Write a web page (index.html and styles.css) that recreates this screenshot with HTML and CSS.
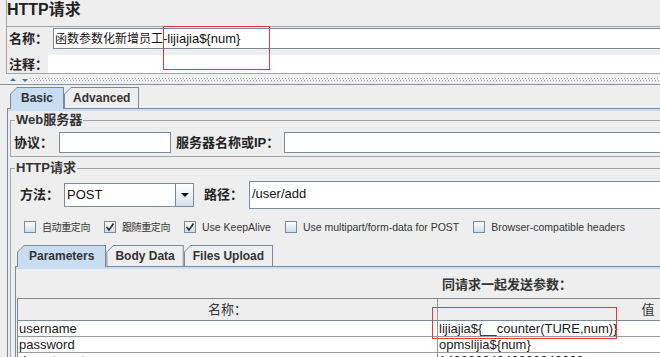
FILE: index.html
```html
<!DOCTYPE html>
<html>
<head>
  <title>HTTP请求</title>
  <link rel="stylesheet" href="styles.css">
</head>
<body>
  <div class="page">
    <div class="top">
      <h1 class="title">HTTP请求</h1>
      <div class="name-row">
        <label class="label">名称：</label>
        <div class="field name-field"><span class="cn">函数参数化新增员工</span>-lijiajia${num}</div>
      </div>
      <div class="note-row">
        <label class="label note-label">注释：</label>
        <div class="note-field"></div>
      </div>
    </div>

    <div class="divider">
      <span class="arrow-up"></span>
      <span class="arrow-down"></span>
      <span class="dots"></span>
    </div>

    <div class="tab-pane">
      <div class="tabs">
        <div class="tab active"><span>Basic</span></div>
        <div class="tab"><span>Advanced</span></div>
      </div>
      <div class="tab-body">
        <fieldset class="group">
          <legend>Web服务器</legend>
          <div class="server-row">
            <label class="label proto-label">协议：</label>
            <div class="field proto-field"></div>
            <label class="label host-label">服务器名称或IP：</label>
            <div class="field grow"></div>
          </div>
        </fieldset>

        <fieldset class="group">
          <legend>HTTP请求</legend>
          <div class="method-row">
            <label class="label method-label">方法：</label>
            <div class="combo">
              <div class="combo-value">POST</div>
              <div class="combo-btn"><span class="caret"></span></div>
            </div>
            <label class="label path-label">路径：</label>
            <div class="field path-field grow">/user/add</div>
          </div>

          <div class="check-row">
            <div class="check"><span class="box"></span><span class="cn">自动重定向</span></div>
            <div class="check">
              <span class="box"><svg width="10" height="10" viewBox="0 0 10 10"><path d="M1.5 5 L4 8 L8.5 1.5" fill="none" stroke="#2b2b2b" stroke-width="1.6"/></svg></span>
              <span class="cn">跟随重定向</span>
            </div>
            <div class="check">
              <span class="box"><svg width="10" height="10" viewBox="0 0 10 10"><path d="M1.5 5 L4 8 L8.5 1.5" fill="none" stroke="#2b2b2b" stroke-width="1.6"/></svg></span>
              <span>Use KeepAlive</span>
            </div>
            <div class="check"><span class="box"></span><span>Use multipart/form-data for POST</span></div>
            <div class="check"><span class="box"></span><span>Browser-compatible headers</span></div>
          </div>

          <div class="tabs sub-tabs">
            <div class="tab active"><span>Parameters</span></div>
            <div class="tab"><span>Body Data</span></div>
            <div class="tab"><span>Files Upload</span></div>
          </div>
          <div class="sub-body">
            <div class="params-title">同请求一起发送参数：</div>
            <div class="params">
              <div class="cell head">名称：</div>
              <div class="cell head">值</div>
              <div class="cell">username</div>
              <div class="cell">lijiajia${__counter(TURE,num)}</div>
              <div class="cell">password</div>
              <div class="cell">opmslijia${num}</div>
              <div class="cell">department</div>
              <div class="cell">14000004040000040000</div>
            </div>
          </div>
        </fieldset>
      </div>
    </div>

    <div class="mark mark-name"></div>
    <div class="mark mark-value"></div>
  </div>
</body>
</html>
```

FILE: styles.css
```css
body {
  margin: 0;
  background: #eeeeee;
  font-family: "Liberation Sans", "Noto Sans CJK SC", sans-serif;
  color: #222;
  overflow: hidden;
}

.page {
  position: relative;
  width: 1000px;
  height: 357px;
  overflow: hidden;
}

/* top panel */
.top {
  margin-left: 6px;
  height: 73px;
  border-left: 1px solid #a3a3a3;
  border-bottom: 1px solid #a3a3a3;
}

.title {
  margin: 0;
  height: 25px;
  padding-top: 1px;
  font-size: 16px;
  font-weight: bold;
  line-height: 18px;
  border-bottom: 1px solid #a3a3a3;
}

.label {
  flex: none;
  font-size: 13px;
  font-weight: bold;
  line-height: 16px;
  white-space: nowrap;
}

.field {
  box-sizing: border-box;
  height: 21px;
  padding-left: 2px;
  border: 1px solid #7a8a99;
  background: #fff;
  font-size: 13px;
  line-height: 19px;
  color: #111;
  white-space: nowrap;
}

.grow {
  flex: 1;
}

.name-row {
  display: flex;
  align-items: center;
  height: 21px;
  margin-top: 1px;
  padding-left: 2px;
}

.name-row .label {
  width: 44px;
}

.name-field {
  flex: 1;
  padding-left: 1px;
}

.name-field .cn {
  font-size: 12px;
}

.note-row {
  display: flex;
  height: 24px;
  padding-left: 2px;
}

.note-label {
  width: 39px;
  margin-top: 9px;
  line-height: 14px;
}

.note-field {
  flex: 1;
  height: 18px;
  margin-top: 6px;
  background: #fff;
}

/* split divider */
.divider {
  display: flex;
  align-items: center;
  height: 10px;
  padding-left: 10px;
  border-bottom: 1px solid #8595a6;
}

.arrow-up {
  width: 0;
  height: 0;
  border-left: 3px solid transparent;
  border-right: 3px solid transparent;
  border-bottom: 3px solid #4f6f99;
}

.arrow-down {
  width: 0;
  height: 0;
  margin: 2px 2px 0 6px;
  border-left: 3px solid transparent;
  border-right: 3px solid transparent;
  border-top: 3px solid #4f6f99;
}

.dots {
  flex: 1;
  height: 3px;
  margin-top: 1px;
  background-image: linear-gradient(90deg, #9aa7b6 1px, transparent 1px), linear-gradient(90deg, #9aa7b6 1px, transparent 1px);
  background-size: 3px 1px;
  background-repeat: repeat-x;
  background-position: 0 0, 1px 2px;
}

/* tabbed pane */
.tab-pane {
  margin-left: 7px;
  padding-top: 2px;
}

.tabs {
  display: flex;
  align-items: flex-end;
  height: 21px;
  padding-left: 3px;
  border-bottom: 1px solid #7a8a99;
}

.tab {
  box-sizing: border-box;
  height: 21px;
  padding: 1px 1px 0 1px;
  background: #7a8a99;
  clip-path: polygon(0 7px, 7px 0, 100% 0, 100% 100%, 0 100%);
}

.tab span {
  display: block;
  height: 20px;
  padding: 0 8px;
  background: #eeeeee;
  font-size: 12px;
  font-weight: bold;
  line-height: 20px;
  color: #333;
  clip-path: polygon(0 6px, 6px 0, 100% 0, 100% 100%, 0 100%);
}

.tab.active {
  height: 22px;
  margin-bottom: -1px;
}

.tab.active span {
  height: 21px;
  padding: 0 10px;
  background: #c8ddf2;
}

.tab-body {
  height: 300px;
  padding: 2px 0 0 2px;
  border-left: 1px solid #7a8a99;
  box-shadow: inset 0 2px 0 #c8ddf2;
}

/* titled groups */
.group {
  margin: 1px 0 0 0;
  padding: 0;
  border: 1px solid #a5a5a5;
  min-inline-size: auto;
}

.group + .group {
  margin-top: 3px;
}

.group legend {
  margin-left: 4px;
  padding: 0 1px;
  font-size: 13px;
  font-weight: bold;
  line-height: 16px;
  color: #333;
}

.server-row {
  display: flex;
  align-items: center;
  height: 21px;
  margin: 4px 0 3px 3px;
}

.proto-label {
  width: 45px;
}

.proto-field {
  width: 112px;
  margin-right: 5px;
}

.host-label {
  width: 108px;
}

.method-row {
  display: flex;
  align-items: center;
  height: 29px;
  margin-top: 4px;
  padding-left: 9px;
}

.method-label {
  width: 44px;
}

.combo {
  display: flex;
  box-sizing: border-box;
  width: 130px;
  height: 24px;
  margin-right: 10px;
  border: 1px solid #7a8a99;
  background: #fff;
}

.combo-value {
  flex: 1;
  padding-left: 2px;
  font-size: 13px;
  line-height: 22px;
  color: #111;
}

.combo-btn {
  display: flex;
  align-items: center;
  justify-content: center;
  width: 17px;
  border-left: 1px solid #7a8a99;
  background: linear-gradient(#ffffff, #d6e2ee);
}

.caret {
  width: 0;
  height: 0;
  border-left: 4px solid transparent;
  border-right: 4px solid transparent;
  border-top: 4px solid #111;
}

.path-label {
  width: 45px;
}

.path-field {
  height: 28px;
  line-height: 24px;
}

/* checkboxes */
.check-row {
  display: flex;
  align-items: center;
  gap: 14px;
  height: 13px;
  margin-top: 11px;
  padding-left: 13px;
}

.check {
  display: flex;
  align-items: center;
  gap: 6px;
  font-size: 10.5px;
  color: #333;
  white-space: nowrap;
}

.check .cn {
  font-size: 10px;
  letter-spacing: -0.4px;
}

.box {
  display: flex;
  align-items: center;
  justify-content: center;
  box-sizing: border-box;
  width: 12px;
  height: 12px;
  border: 1px solid #7a8a99;
  background: linear-gradient(#ffffff, #cfdbe8);
}

/* parameters */
.sub-tabs {
  margin: 12px 0 0 4px;
  padding-left: 2px;
}

.sub-tabs .tab.active span {
  padding: 0 11px;
}

.sub-body {
  height: 100px;
  margin-left: 4px;
  border-left: 1px solid #7a8a99;
  box-shadow: inset 0 2px 0 #c8ddf2;
}

.params-title {
  padding: 10px 0 5px 426px;
  font-size: 13px;
  font-weight: bold;
  line-height: 16px;
  color: #333;
}

.params {
  display: grid;
  grid-template-columns: 420px 420px;
  margin-left: 1px;
  border-top: 1px solid #7a8a99;
  border-left: 1px solid #7a8a99;
}

.cell {
  box-sizing: border-box;
  height: 16px;
  padding-left: 1px;
  border-bottom: 1px solid #999;
  background: #fff;
  font-size: 13px;
  line-height: 15px;
  color: #1a1a1a;
  white-space: nowrap;
}

.cell:nth-child(odd) {
  border-right: 1px solid #999;
}

.cell.head {
  height: 22px;
  padding-left: 0;
  border-bottom-color: #7a8a99;
  background: #eeeeee;
  line-height: 21px;
  text-align: center;
  color: #333;
}

/* annotation marks */
.mark {
  position: absolute;
  box-sizing: border-box;
  border: 1px solid #e53935;
}

.mark-name {
  left: 163px;
  top: 26px;
  width: 107px;
  height: 44px;
}

.mark-value {
  left: 432px;
  top: 307px;
  width: 185px;
  height: 32px;
}
```
